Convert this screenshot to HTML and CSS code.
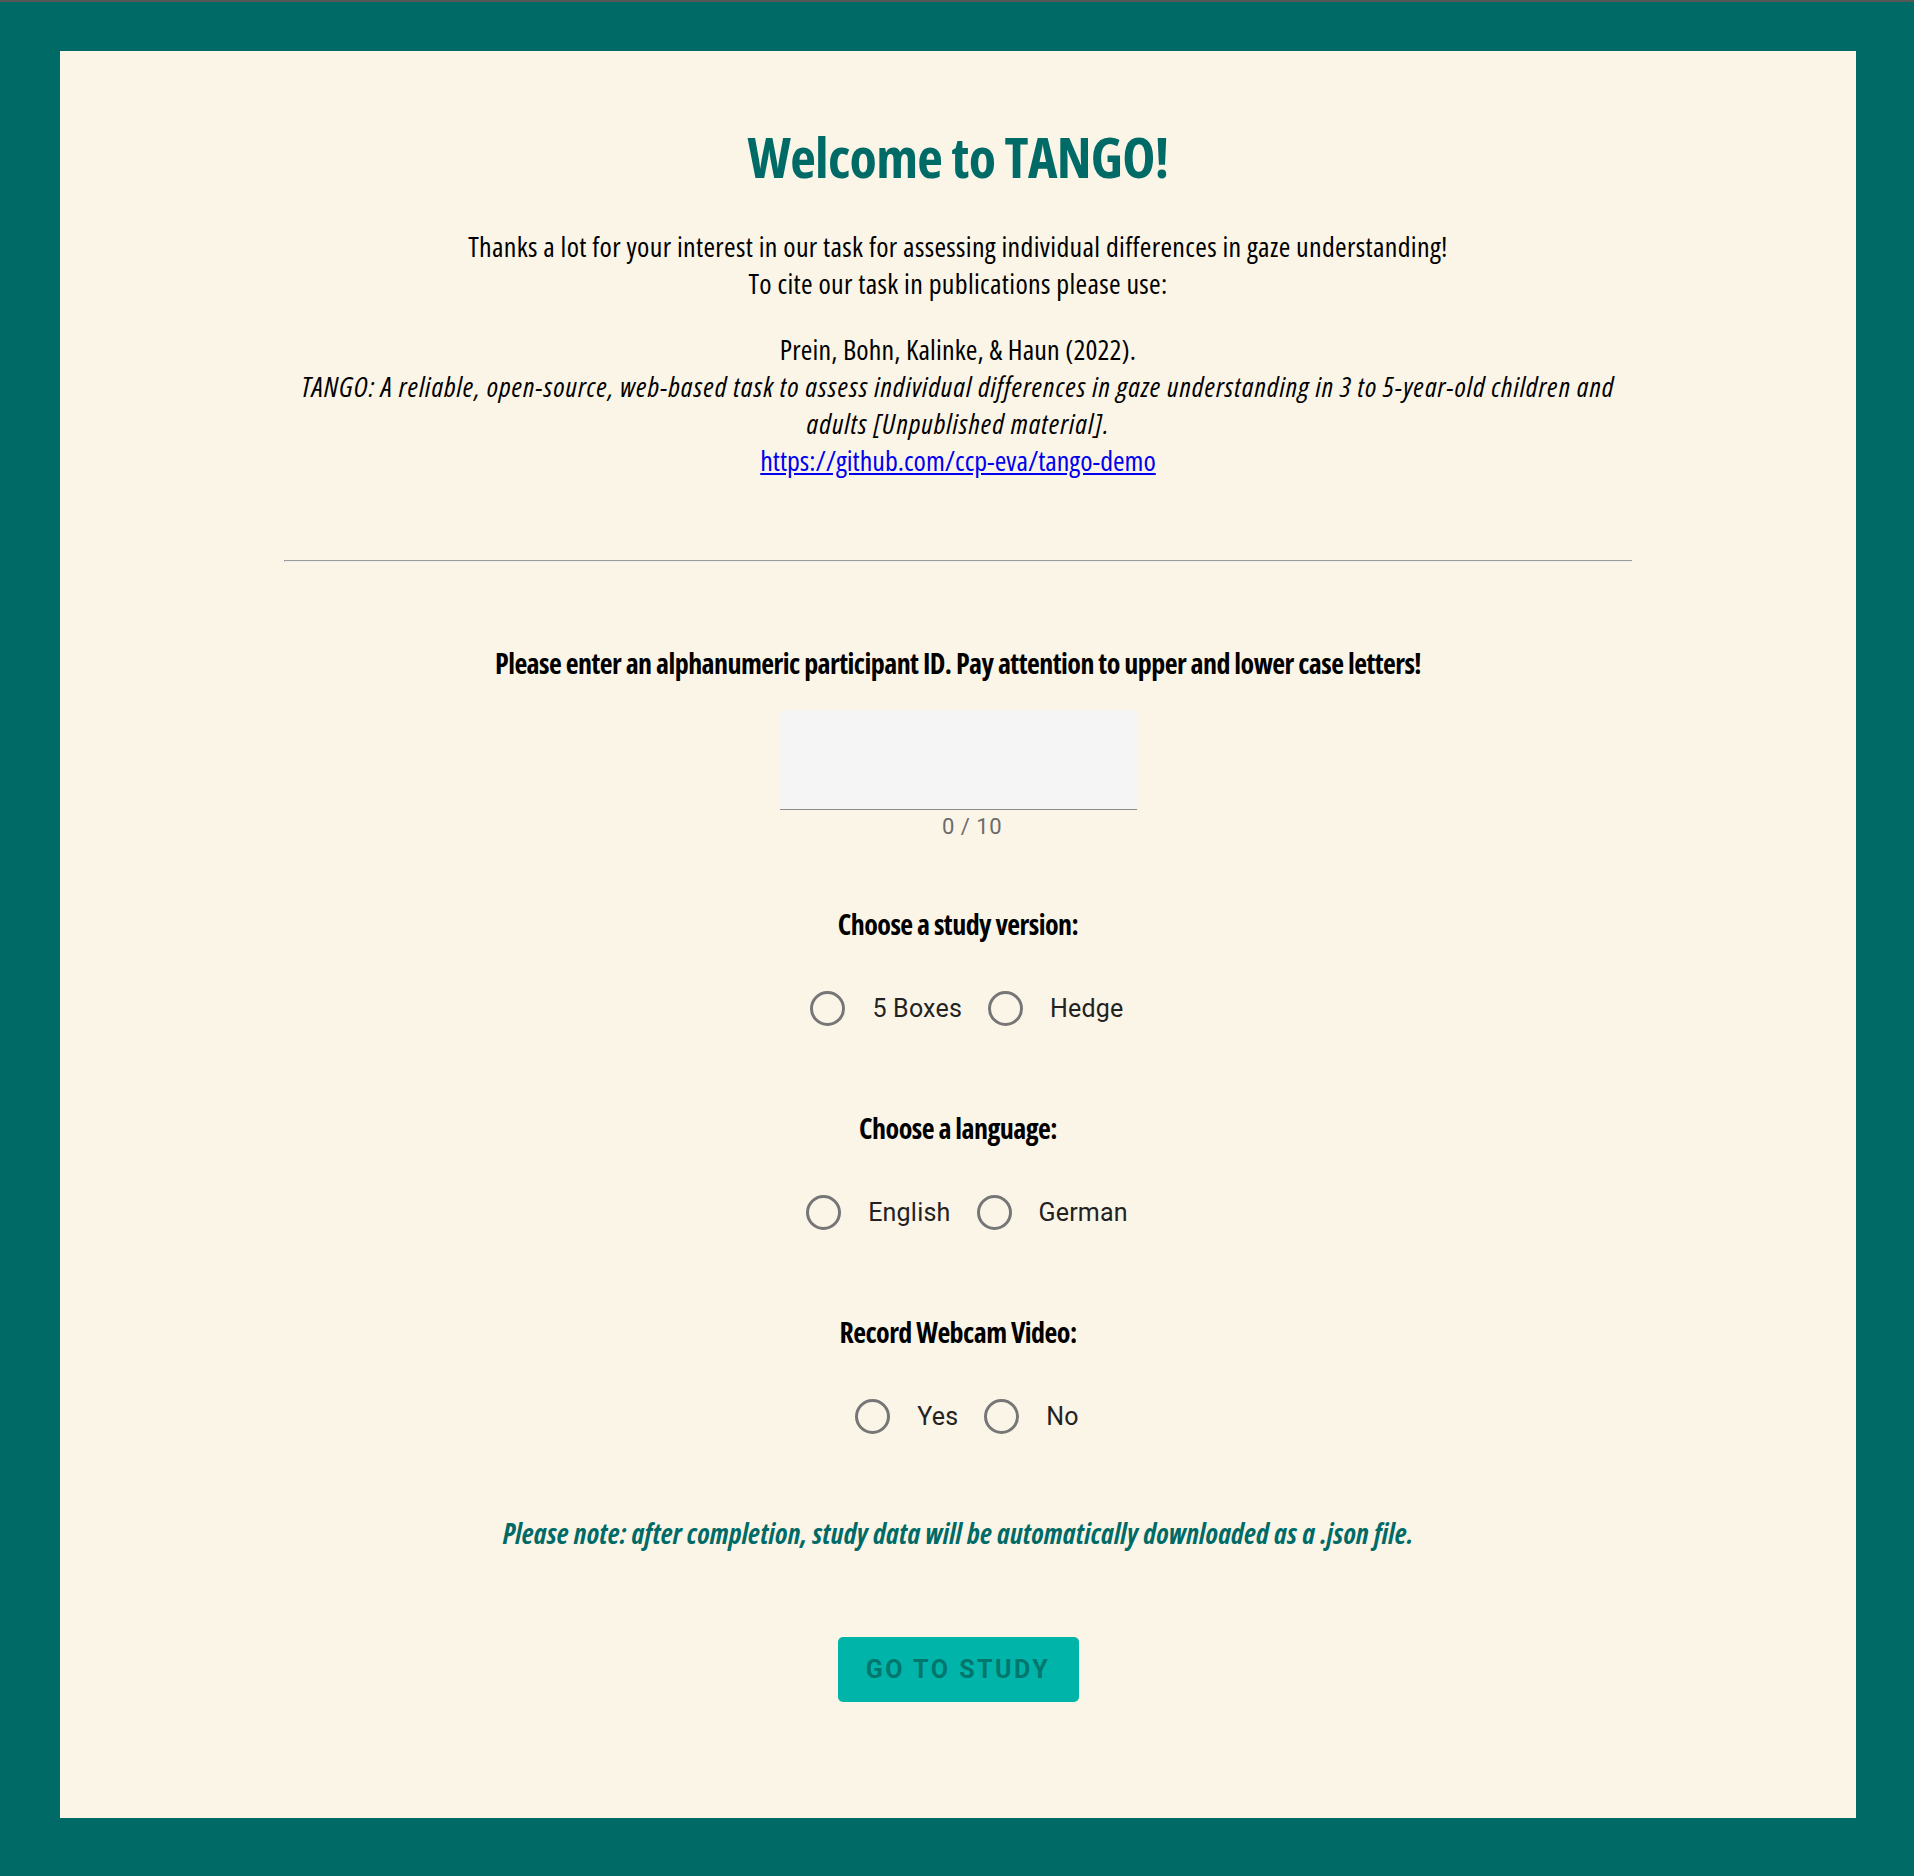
FILE: index.html
```html
<!DOCTYPE html>
<html lang="en">
<head>
<meta charset="utf-8">
<title>TANGO</title>
<link rel="stylesheet" href="styles.css">
</head>
<body>
<main class="card">
  <h1 class="title">Welcome to TANGO!</h1>
  <section class="intro">
    <p class="thanks">Thanks a lot for your interest in our task for assessing individual differences in gaze understanding!<br>To cite our task in publications please use:</p>
    <p class="cite"><span class="authors">Prein, Bohn, Kalinke, &amp; Haun (2022).</span><br><em>TANGO: A reliable, open-source, web-based task to assess individual differences in gaze understanding in 3 to 5-year-old children and<br>adults [Unpublished material].</em><br><a href="https://github.com/ccp-eva/tango-demo">https://github.com/ccp-eva/tango-demo</a></p>
  </section>
  <hr class="divider">
  <form class="form">
    <p class="label label-first">Please enter an alphanumeric participant ID. Pay attention to upper and lower case letters!</p>
    <input class="id-input" type="text" maxlength="10">
    <div class="counter">0 / 10</div>

    <p class="label label-study">Choose a study version:</p>
    <div class="radios">
      <label class="radio"><span class="ring"></span><span class="radio-text">5 Boxes</span></label>
      <label class="radio"><span class="ring"></span><span class="radio-text">Hedge</span></label>
    </div>

    <p class="label label-group">Choose a language:</p>
    <div class="radios">
      <label class="radio"><span class="ring"></span><span class="radio-text">English</span></label>
      <label class="radio"><span class="ring"></span><span class="radio-text">German</span></label>
    </div>

    <p class="label label-group">Record Webcam Video:</p>
    <div class="radios radios-last">
      <label class="radio"><span class="ring"></span><span class="radio-text">Yes</span></label>
      <label class="radio"><span class="ring"></span><span class="radio-text">No</span></label>
    </div>

    <p class="note">Please note: after completion, study data will be automatically downloaded as a .json file.</p>
    <button class="go" type="button">Go to study</button>
  </form>
</main>
</body>
</html>
```
FILE: styles.css
```css
html, body {
  margin: 0;
}
body {
  background: #006b66;
  border-top: 2px solid #575757;
  padding: 49px 58px 58px 60px;
  font-family: "Open Sans", "Liberation Sans", sans-serif;
  font-stretch: 75%;
  color: #000;
}
.card {
  background: #fbf5e8;
  padding: 72px 0 116px;
  text-align: center;
}
.title {
  margin: 0;
  font-size: 56px;
  line-height: 66px;
  font-weight: 700;
  letter-spacing: -0.7px;
  color: #006b66;
}
.intro {
  width: 1347px;
  margin: 0 auto;
  font-size: 28px;
  line-height: 37px;
  white-space: nowrap;
}
.intro p {
  margin: 0;
}
.thanks {
  padding-top: 39px;
  letter-spacing: 0.33px;
}
.cite {
  padding-top: 29px;
}
.authors {
  letter-spacing: 0.15px;
}
.cite em {
  letter-spacing: 1px;
}
.cite a {
  color: #0000ee;
}
.divider {
  width: 1347px;
  margin: 81px auto 0;
  border: 0;
  border-top: 1px solid #9a9a9a;
  border-bottom: 1px solid #eeeeee;
  border-left: 1px solid #9a9a9a;
  height: 0;
}
.form {
  display: flex;
  flex-direction: column;
  align-items: center;
}
.label {
  margin: 0;
  font-size: 28px;
  line-height: 37px;
  font-weight: 700;
  letter-spacing: -0.55px;
}
.label-first {
  margin-top: 83px;
}
.label-study {
  margin-top: 66px;
}
.label-group {
  margin-top: 82px;
}
.id-input {
  margin-top: 28px;
  width: 357px;
  height: 100px;
  box-sizing: border-box;
  border: 0;
  border-bottom: 1px solid #8c8c8c;
  border-radius: 4px 4px 0 0;
  background: #f5f5f5;
  outline: none;
  font: 22px Roboto, sans-serif;
  padding: 0 12px;
}
.counter {
  margin-top: 4px;
  padding-left: 28px;
  font-family: Roboto, sans-serif;
  font-stretch: 100%;
  font-size: 22px;
  line-height: 26px;
  letter-spacing: 0.5px;
  color: #6b6b6b;
}
.radios {
  margin-top: 45px;
  height: 40px;
  display: flex;
  align-items: center;
  justify-content: center;
  gap: 26px;
  padding-left: 18px;
}
.radio {
  display: flex;
  align-items: center;
  gap: 27px;
  cursor: pointer;
}
.ring {
  width: 35px;
  height: 35px;
  box-sizing: border-box;
  border: 3px solid #767676;
  border-radius: 50%;
}
.radio-text {
  font-family: Roboto, sans-serif;
  font-stretch: 100%;
  font-size: 25px;
  letter-spacing: 0.2px;
  color: #222;
}
.note {
  margin: 79px 0 0;
  font-size: 28px;
  line-height: 37px;
  font-weight: 700;
  font-style: italic;
  letter-spacing: 0.22px;
  color: #006b66;
}
.go {
  margin-top: 85px;
  width: 241px;
  height: 65px;
  border: 0;
  border-radius: 5px;
  background: #00b4a9;
  color: #00766d;
  font-family: Roboto, sans-serif;
  font-stretch: 100%;
  font-weight: 700;
  font-size: 25px;
  letter-spacing: 2.5px;
  text-transform: uppercase;
  cursor: pointer;
}
```
